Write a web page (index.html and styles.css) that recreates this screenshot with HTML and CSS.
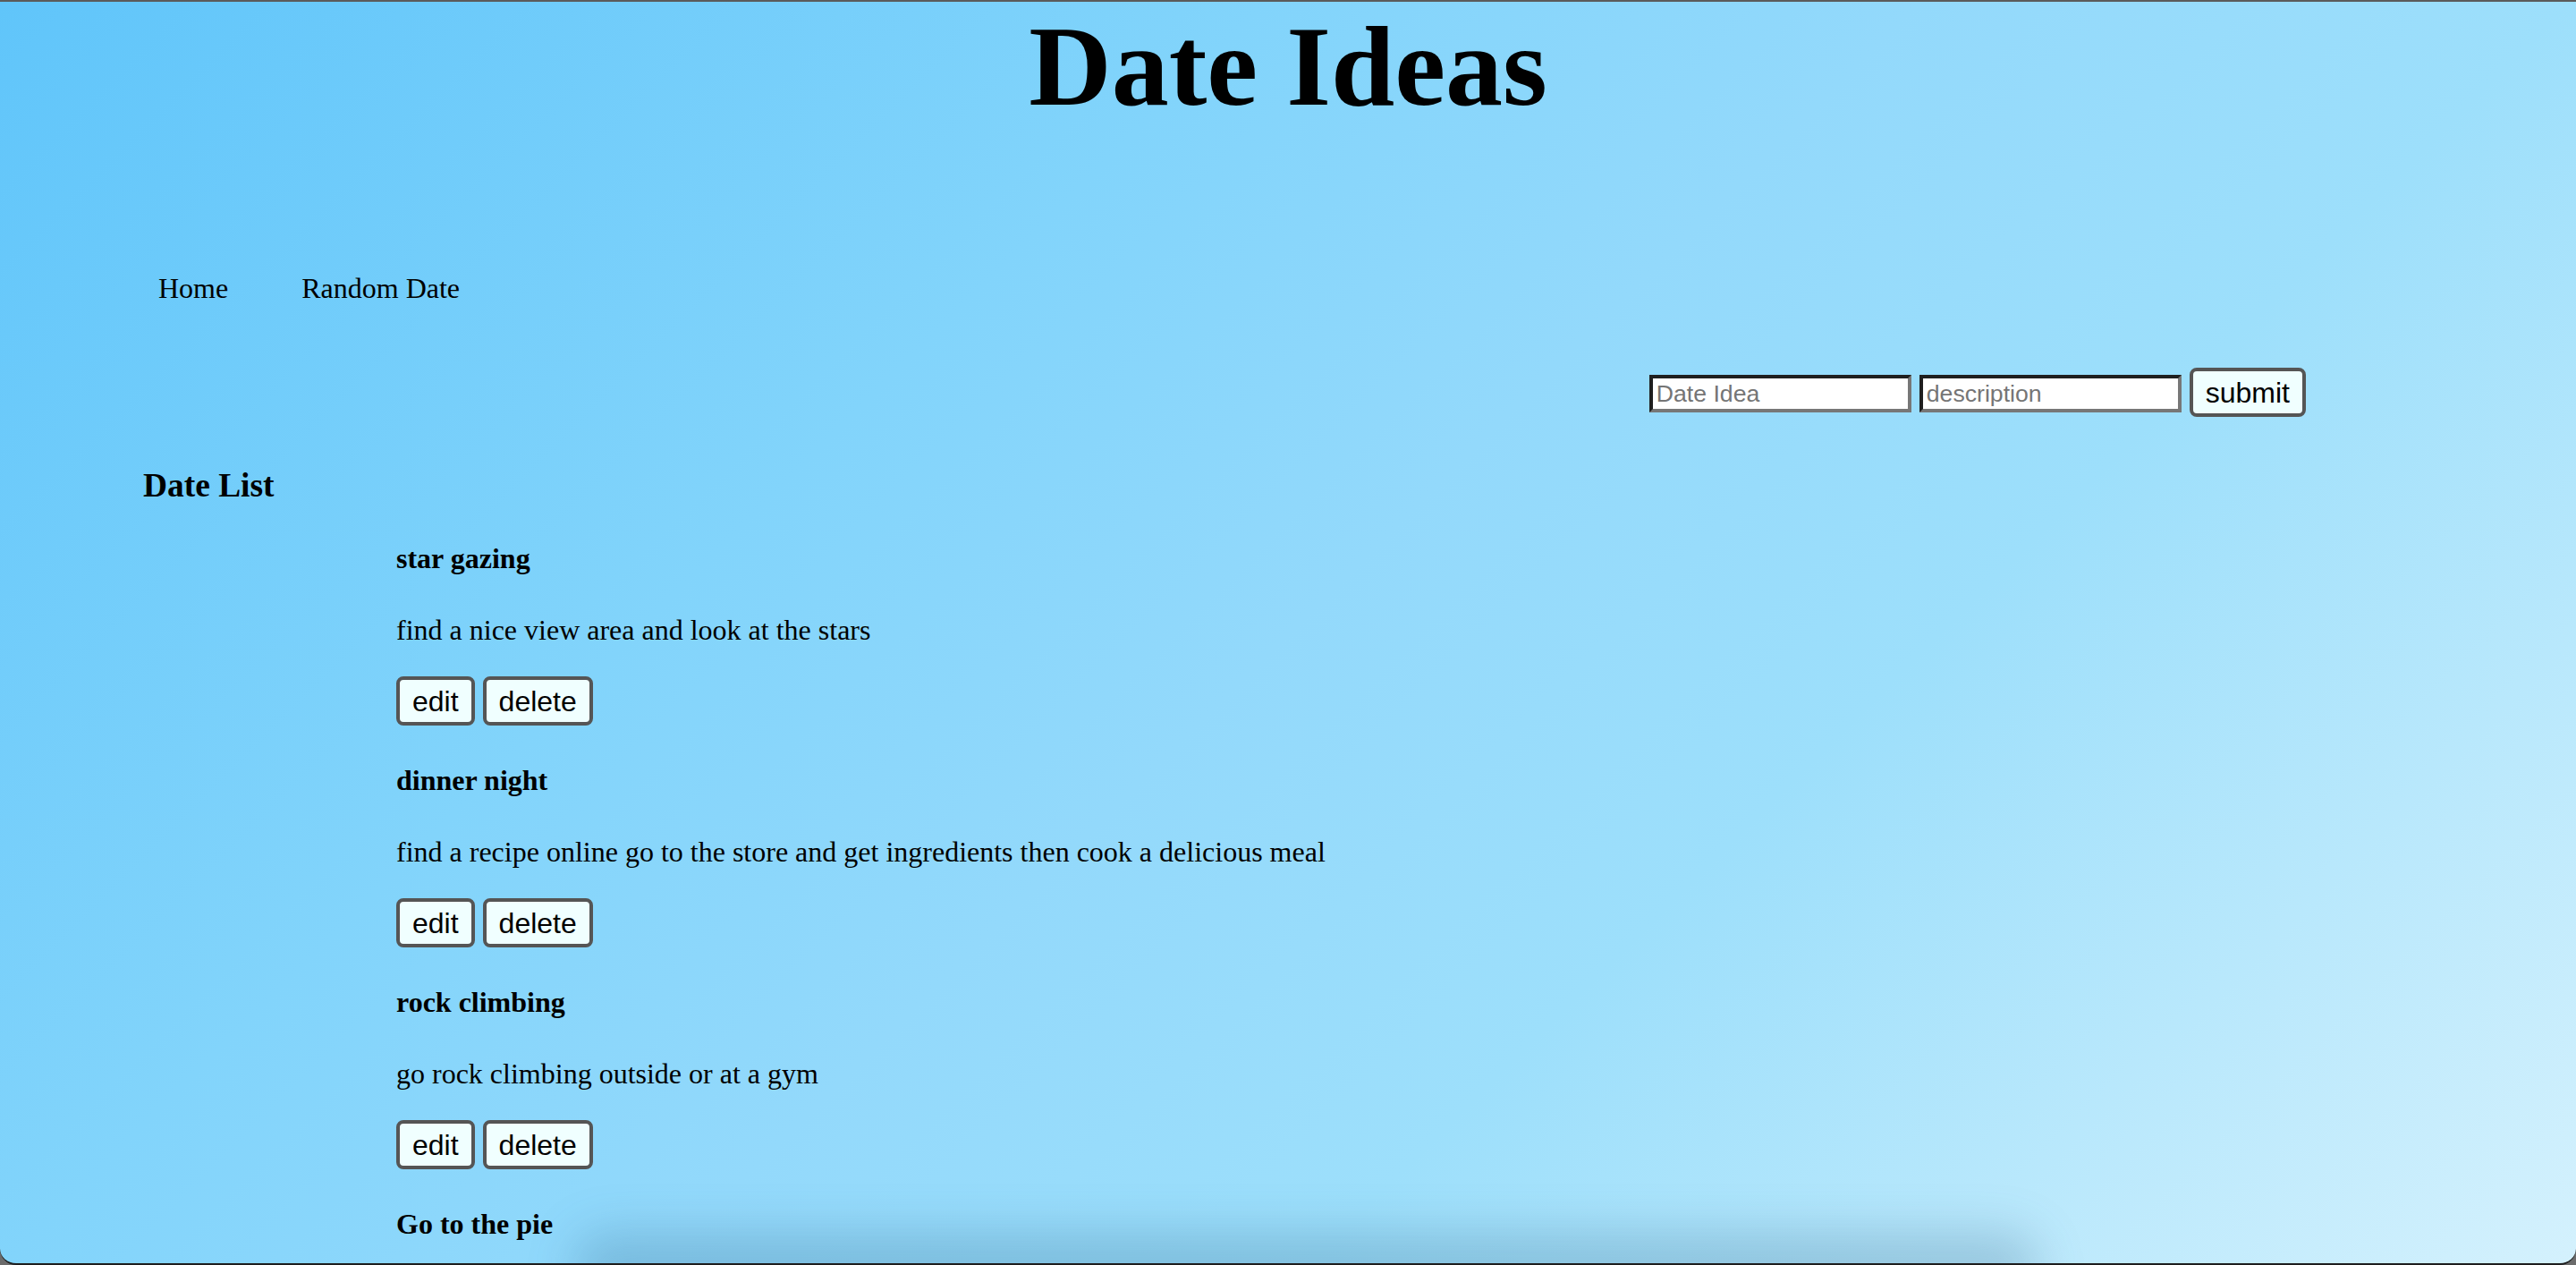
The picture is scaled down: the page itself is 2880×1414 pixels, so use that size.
FILE: index.html
```html
<!DOCTYPE html>
<html lang="en">
<head>
<meta charset="utf-8">
<title>Date Ideas</title>
<link rel="stylesheet" href="styles.css">
</head>
<body>
<div class="window">
  <h1 class="title">Date Ideas</h1>
  <nav class="nav">
    <a class="nav-link" href="#">Home</a>
    <a class="nav-link" href="#">Random Date</a>
  </nav>
  <form class="add-form">
    <input class="field" type="text" placeholder="Date Idea">
    <input class="field" type="text" placeholder="description">
    <button class="btn" type="button">submit</button>
  </form>
  <section class="list">
    <h3 class="list-title">Date List</h3>
    <ul class="items">
      <li class="item">
        <h4 class="item-name">star gazing</h4>
        <p class="item-desc">find a nice view area and look at the stars</p>
        <div class="actions"><button class="btn" type="button">edit</button><button class="btn" type="button">delete</button></div>
      </li>
      <li class="item">
        <h4 class="item-name">dinner night</h4>
        <p class="item-desc">find a recipe online go to the store and get ingredients then cook a delicious meal</p>
        <div class="actions"><button class="btn" type="button">edit</button><button class="btn" type="button">delete</button></div>
      </li>
      <li class="item">
        <h4 class="item-name">rock climbing</h4>
        <p class="item-desc">go rock climbing outside or at a gym</p>
        <div class="actions"><button class="btn" type="button">edit</button><button class="btn" type="button">delete</button></div>
      </li>
      <li class="item">
        <h4 class="item-name">Go to the pie</h4>
      </li>
    </ul>
  </section>
  <div class="dock-shadow"></div>
</div>
</body>
</html>
```

FILE: styles.css
```css
html, body {
  margin: 0;
  padding: 0;
  background: #6b6b6b;
}

.window {
  position: relative;
  height: 1414px;
  box-sizing: border-box;
  border-top: 2px solid #5b5b5b;
  border-bottom: 2px solid #1e1e1e;
  border-radius: 0 0 18px 18px;
  overflow: hidden;
  background: linear-gradient(135deg, #60c5fa 0%, #82d4fb 33%, #93d9fb 50%, #9ddffb 67%, #d4f1fd 100%);
  font-family: "Liberation Serif", "Times New Roman", serif;
  color: #000;
}

.title {
  margin: 0;
  padding-top: 8px;
  font-size: 128px;
  line-height: 128px;
  font-weight: bold;
  text-align: center;
}

.nav {
  display: flex;
  gap: 82px;
  padding-left: 177px;
  margin-top: 166px;
  font-size: 32px;
  line-height: 37px;
}

.nav-link {
  color: #000;
  text-decoration: none;
}

.add-form {
  display: flex;
  justify-content: flex-end;
  align-items: flex-start;
  gap: 9px;
  height: 55px;
  margin: 70px 0 0;
  padding-right: 302px;
}

.field {
  width: 293px;
  height: 42px;
  box-sizing: border-box;
  margin: 8px 0 0;
  padding: 0 4px;
  border-width: 4px;
  border-style: solid;
  border-color: #1f1f1f #777 #777 #1f1f1f;
  background: #fff;
  font-family: "Liberation Sans", Arial, sans-serif;
  font-size: 26.67px;
  color: #000;
  outline: none;
}

.field::placeholder {
  color: #757575;
}

.btn {
  height: 55px;
  box-sizing: border-box;
  margin: 0;
  padding: 0 14px;
  border: 4px solid #555;
  border-radius: 8px;
  background: #f0ffff;
  font-family: "Liberation Sans", Arial, sans-serif;
  font-size: 32px;
  line-height: 1;
  color: #000;
}

.list {
  margin-top: 55px;
  padding-left: 160px;
}

.list-title {
  margin: 0;
  font-size: 37.44px;
  line-height: 43px;
  font-weight: bold;
}

.items {
  list-style: none;
  margin: 42px 0 0;
  padding: 0 0 0 283px;
  display: flex;
  flex-direction: column;
  gap: 43px;
}

.item-name {
  margin: 0 0 43px;
  font-size: 32px;
  line-height: 37px;
  font-weight: bold;
}

.item-desc {
  margin: 0 0 33px;
  font-size: 32px;
  line-height: 37px;
}

.actions {
  display: flex;
  gap: 9px;
}

.dock-shadow {
  position: absolute;
  left: 640px;
  right: 600px;
  bottom: -45px;
  height: 80px;
  border-radius: 40px;
  background: rgba(20, 70, 110, 0.2);
  filter: blur(26px);
  pointer-events: none;
}
```
